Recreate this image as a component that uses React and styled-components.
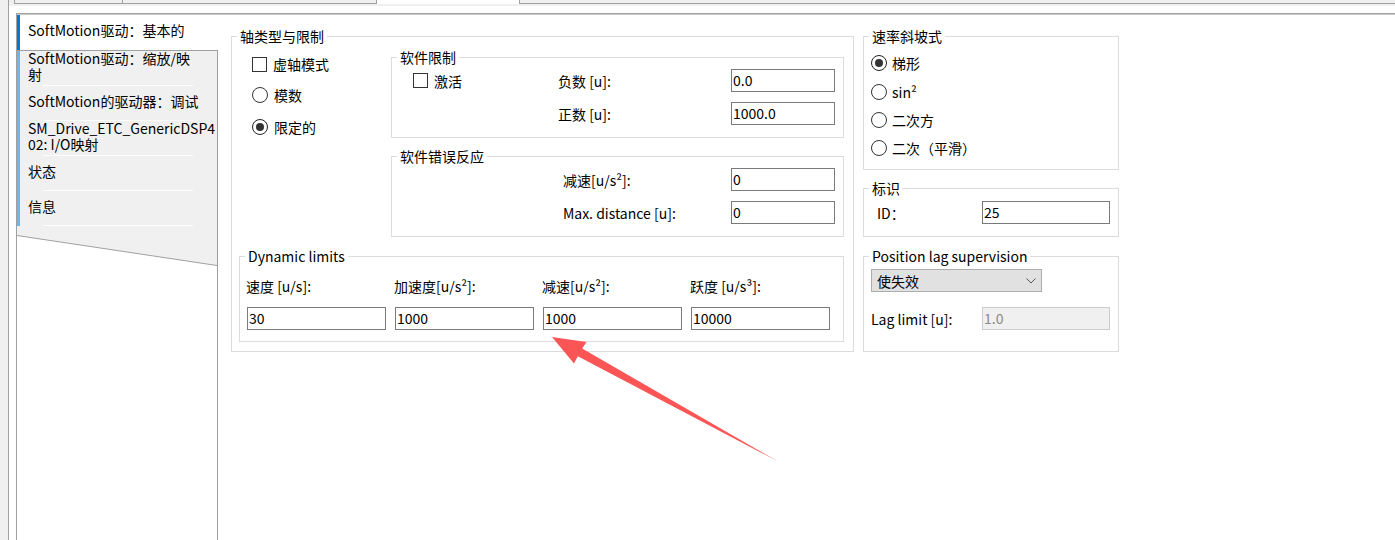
import React from 'react';
import styled, { createGlobalStyle } from 'styled-components';

const GlobalStyle = createGlobalStyle`
  html, body {
    margin: 0;
    padding: 0;
    background: #fff;
  }
  body {
    font-family: "Noto Sans CJK SC", "Liberation Sans", sans-serif;
    font-size: 14px;
    color: #000;
  }
  * {
    box-sizing: border-box;
  }
`;

const Window = styled.div`
  position: relative;
  display: flex;
  width: 1395px;
  height: 540px;
  overflow: hidden;
  background: #fff;
`;

const Gutter = styled.div`
  flex: none;
  width: 9px;
  background: #f0f0f0;
  border-right: 1px solid #a0a0a0;
`;

const Main = styled.div`
  flex: 1;
  display: flex;
  flex-direction: column;
`;

const TabStrip = styled.div`
  flex: none;
  display: flex;
  height: 6px;
  padding-left: 5px;
  background: #f0f0f0;
`;

const TabStub = styled.div`
  flex: ${p => (p.$w ? 'none' : 1)};
  width: ${p => (p.$w ? `${p.$w}px` : 'auto')};
  height: 4px;
  background: ${p => (p.$active ? '#fff' : '#f0f0f0')};
  border-left: ${p => (p.$edge ? '1px solid #a0a0a0' : 'none')};
  border-right: ${p => (p.$w ? '1px solid #a0a0a0' : 'none')};
  border-bottom: ${p => (p.$active ? 'none' : '1px solid #a0a0a0')};
`;

const Frame = styled.div`
  flex: 1;
  display: flex;
  flex-direction: column;
  margin: 7px 0 0 7px;
  border-top: 1px solid #a4a4a4;
  border-left: 1px solid #a0a0a0;
`;

const FrameBody = styled.div`
  flex: 1;
  display: flex;
  border-top: 1px solid #c8c8c8;
`;

/* vertical page list on the left */
const Sidebar = styled.div`
  flex: none;
  width: 201px;
  display: flex;
  flex-direction: column;
`;

const CurrentPage = styled.div`
  height: 35px;
  display: flex;
  align-items: center;
  padding: 0 0 5px 8px;
  border-left: 3px solid #0078d7;
  line-height: 16px;
  background: #fff;
`;

const PageStack = styled.div`
  flex: 1;
  display: flex;
  flex-direction: column;
  border-top: 1px solid #a0a0a0;
  border-right: 1px solid #a0a0a0;
  background: #fff;
`;

const PageItem = styled.div`
  position: relative;
  height: 35px;
  display: flex;
  align-items: center;
  padding: 0 0 5px 8px;
  border-left: 3px solid #6ab6f2;
  background: #f0f0f0;
  line-height: 16px;
  white-space: pre-line;

  &::after {
    content: '';
    position: absolute;
    left: 23px;
    right: 24px;
    bottom: 0;
    height: 1px;
    background: #fff;
  }
`;

const Fold = styled.svg`
  display: block;
  flex: none;
`;

/* property panels */
const Content = styled.div`
  flex: 1;
  display: flex;
  align-items: flex-start;
  gap: 9px;
  padding: 13px 0 0 13px;
`;

const Group = styled.fieldset`
  margin: ${p => p.$mt || 0}px 0 0;
  padding: ${p => p.$pad};
  width: ${p => (p.$w ? `${p.$w}px` : 'auto')};
  min-width: 0;
  border: 1px solid #dcdcdc;
`;

const Caption = styled.legend`
  margin-left: -2px;
  padding: 0 3px;
  height: 16px;
  line-height: 16px;
`;

const SideColumn = styled.div`
  flex: none;
  width: 256px;
  display: flex;
  flex-direction: column;
`;

const TopGrid = styled.div`
  display: grid;
  grid-template-columns: 152px 1fr;
  margin-top: 5px;
`;

const OptionList = styled.div`
  display: flex;
  flex-direction: column;
  padding-left: ${p => p.$indent || 0}px;
`;

const Option = styled.div`
  height: ${p => p.$h || 32}px;
  display: flex;
  align-items: center;
  gap: ${p => p.$gap || 6}px;
  line-height: 16px;
`;

const CheckBox = styled.span`
  flex: none;
  width: 15px;
  height: 15px;
  border: 1px solid #333;
  background: #fff;
`;

const RadioDot = styled.span`
  flex: none;
  display: grid;
  place-items: center;
  width: 16px;
  height: 16px;
  border-radius: 50%;
  border: 1px solid ${p => (p.$on ? '#222' : '#333')};
  background: #fff;

  &::after {
    content: '';
    display: ${p => (p.$on ? 'block' : 'none')};
    width: 8px;
    height: 8px;
    border-radius: 50%;
    background: #333;
  }
`;

const FieldGrid = styled.div`
  display: grid;
  grid-template-columns: ${p => p.$lead}px 1fr 104px;
  grid-auto-rows: 23px;
  row-gap: 10px;
  align-items: center;
  line-height: 16px;
`;

const LeadCell = styled.div`
  display: flex;
  align-items: center;
  gap: 6px;
  padding-left: 14px;
`;

const TextBox = styled.input`
  width: 100%;
  height: 23px;
  margin: 0;
  padding: 0 1px 1px;
  border: 1px solid ${p => (p.disabled ? '#cccccc' : '#7a7a7a')};
  background: ${p => (p.disabled ? '#f0f0f0' : '#fff')};
  color: ${p => (p.disabled ? '#8a8a8a' : '#000')};
  font: inherit;
  line-height: 16px;
  outline: none;
`;

const LimitGrid = styled.div`
  display: grid;
  grid-template-columns: repeat(4, 139px);
  grid-template-rows: 16px 23px;
  column-gap: 9px;
  row-gap: 13px;
  line-height: 16px;
`;

const LimitLabel = styled.span`
  margin-left: -1px;
  white-space: nowrap;
`;

const PairRow = styled.div`
  display: grid;
  grid-template-columns: 111px 128px;
  align-items: center;
  height: 23px;
  margin-top: ${p => p.$mt || 0}px;
  line-height: 16px;
`;

const PairLabel = styled.span`
  padding-left: ${p => p.$indent || 0}px;
`;

const Select = styled.div`
  width: 171px;
  height: 23px;
  display: flex;
  align-items: center;
  justify-content: space-between;
  padding: 0 5px 0 5px;
  border: 1px solid #adadad;
  background: #e1e1e1;
  line-height: 16px;
`;

const Pointer = styled.svg`
  position: absolute;
  left: 545px;
  top: 330px;
  pointer-events: none;
`;

const pages = [
  'SoftMotion驱动：缩放/映\n射',
  'SoftMotion的驱动器：调试',
  'SM_Drive_ETC_GenericDSP4\n02: I/O映射',
  '状态',
  '信息',
];

const dynamicLimits = [
  { label: '速度 [u/s]:', value: '30' },
  { label: '加速度[u/s²]:', value: '1000' },
  { label: '减速[u/s²]:', value: '1000' },
  { label: '跃度 [u/s³]:', value: '10000' },
];

const ramps = [
  { label: '梯形', on: true, h: 30 },
  { label: 'sin²', h: 28 },
  { label: '二次方', h: 28 },
  { label: '二次（平滑）', h: 28 },
];

export default function App() {
  return (
    <>
      <GlobalStyle />
      <Window>
        <Gutter />
        <Main>
          <TabStrip>
            <TabStub $w={109} $edge />
            <TabStub $w={254} />
            <TabStub $w={143} $active />
            <TabStub />
          </TabStrip>
          <Frame>
            <FrameBody>
              <Sidebar>
                <CurrentPage>SoftMotion驱动：基本的</CurrentPage>
                <PageStack>
                  {pages.map(p => (
                    <PageItem key={p}>{p}</PageItem>
                  ))}
                  <Fold width="200" height="40" viewBox="0 0 200 40">
                    <polygon points="0,0 200,0 200,39.5 0,9.5" fill="#f0f0f0" />
                    <line x1="0" y1="9.5" x2="200" y2="39.5" stroke="#a0a0a0" strokeWidth="1" />
                  </Fold>
                </PageStack>
              </Sidebar>

              <Content>
                <Group $w={623} $pad="0 9px 9px 7px">
                  <Caption>轴类型与限制</Caption>
                  <TopGrid>
                    <OptionList $indent={13}>
                      <Option $h={30}>
                        <CheckBox />
                        虚轴模式
                      </Option>
                      <Option>
                        <RadioDot />
                        模数
                      </Option>
                      <Option>
                        <RadioDot $on />
                        限定的
                      </Option>
                    </OptionList>

                    <div>
                      <Group $pad="4px 8px 12px 7px">
                        <Caption>软件限制</Caption>
                        <FieldGrid $lead={159}>
                          <LeadCell>
                            <CheckBox />
                            激活
                          </LeadCell>
                          <span>负数 [u]:</span>
                          <TextBox readOnly defaultValue="0.0" />
                          <span />
                          <span>正数 [u]:</span>
                          <TextBox readOnly defaultValue="1000.0" />
                        </FieldGrid>
                      </Group>

                      <Group $mt={10} $pad="4px 8px 12px 7px">
                        <Caption>软件错误反应</Caption>
                        <FieldGrid $lead={164}>
                          <span />
                          <span>减速[u/s²]:</span>
                          <TextBox readOnly defaultValue="0" />
                          <span />
                          <span>Max. distance [u]:</span>
                          <TextBox readOnly defaultValue="0" />
                        </FieldGrid>
                      </Group>
                    </div>
                  </TopGrid>

                  <Group $mt={11} $pad="14px 13px 11px 7px">
                    <Caption>Dynamic limits</Caption>
                    <LimitGrid>
                      {dynamicLimits.map(d => (
                        <LimitLabel key={d.label}>{d.label}</LimitLabel>
                      ))}
                      {dynamicLimits.map(d => (
                        <TextBox key={d.label} readOnly defaultValue={d.value} />
                      ))}
                    </LimitGrid>
                  </Group>
                </Group>

                <SideColumn>
                  <Group $pad="4px 7px 7px 7px">
                    <Caption>速率斜坡式</Caption>
                    <OptionList>
                      {ramps.map(r => (
                        <Option key={r.label} $h={r.h} $gap={5}>
                          <RadioDot $on={r.on} />
                          {r.label}
                        </Option>
                      ))}
                    </OptionList>
                  </Group>

                  <Group $mt={10} $pad="5px 7px 12px 7px">
                    <Caption>标识</Caption>
                    <PairRow>
                      <PairLabel $indent={6}>ID：</PairLabel>
                      <TextBox readOnly defaultValue="25" />
                    </PairRow>
                  </Group>

                  <Group $mt={11} $pad="5px 7px 21px 7px">
                    <Caption>Position lag supervision</Caption>
                    <Select>
                      <span>使失效</span>
                      <svg width="10" height="6" viewBox="0 0 10 6">
                        <path d="M0.5 0.5 L5 5 L9.5 0.5" fill="none" stroke="#555" strokeWidth="1" />
                      </svg>
                    </Select>
                    <PairRow $mt={15}>
                      <PairLabel>Lag limit [u]:</PairLabel>
                      <TextBox disabled defaultValue="1.0" />
                    </PairRow>
                  </Group>
                </SideColumn>
              </Content>
            </FrameBody>
          </Frame>
        </Main>

        <Pointer width="240" height="140" viewBox="0 0 240 140">
          <polygon
            points="7,7 41.5,12 37.2,18.5 233,131.5 32.8,26.3 29,33.5"
            fill="#fb5555"
          />
        </Pointer>
      </Window>
    </>
  );
}
